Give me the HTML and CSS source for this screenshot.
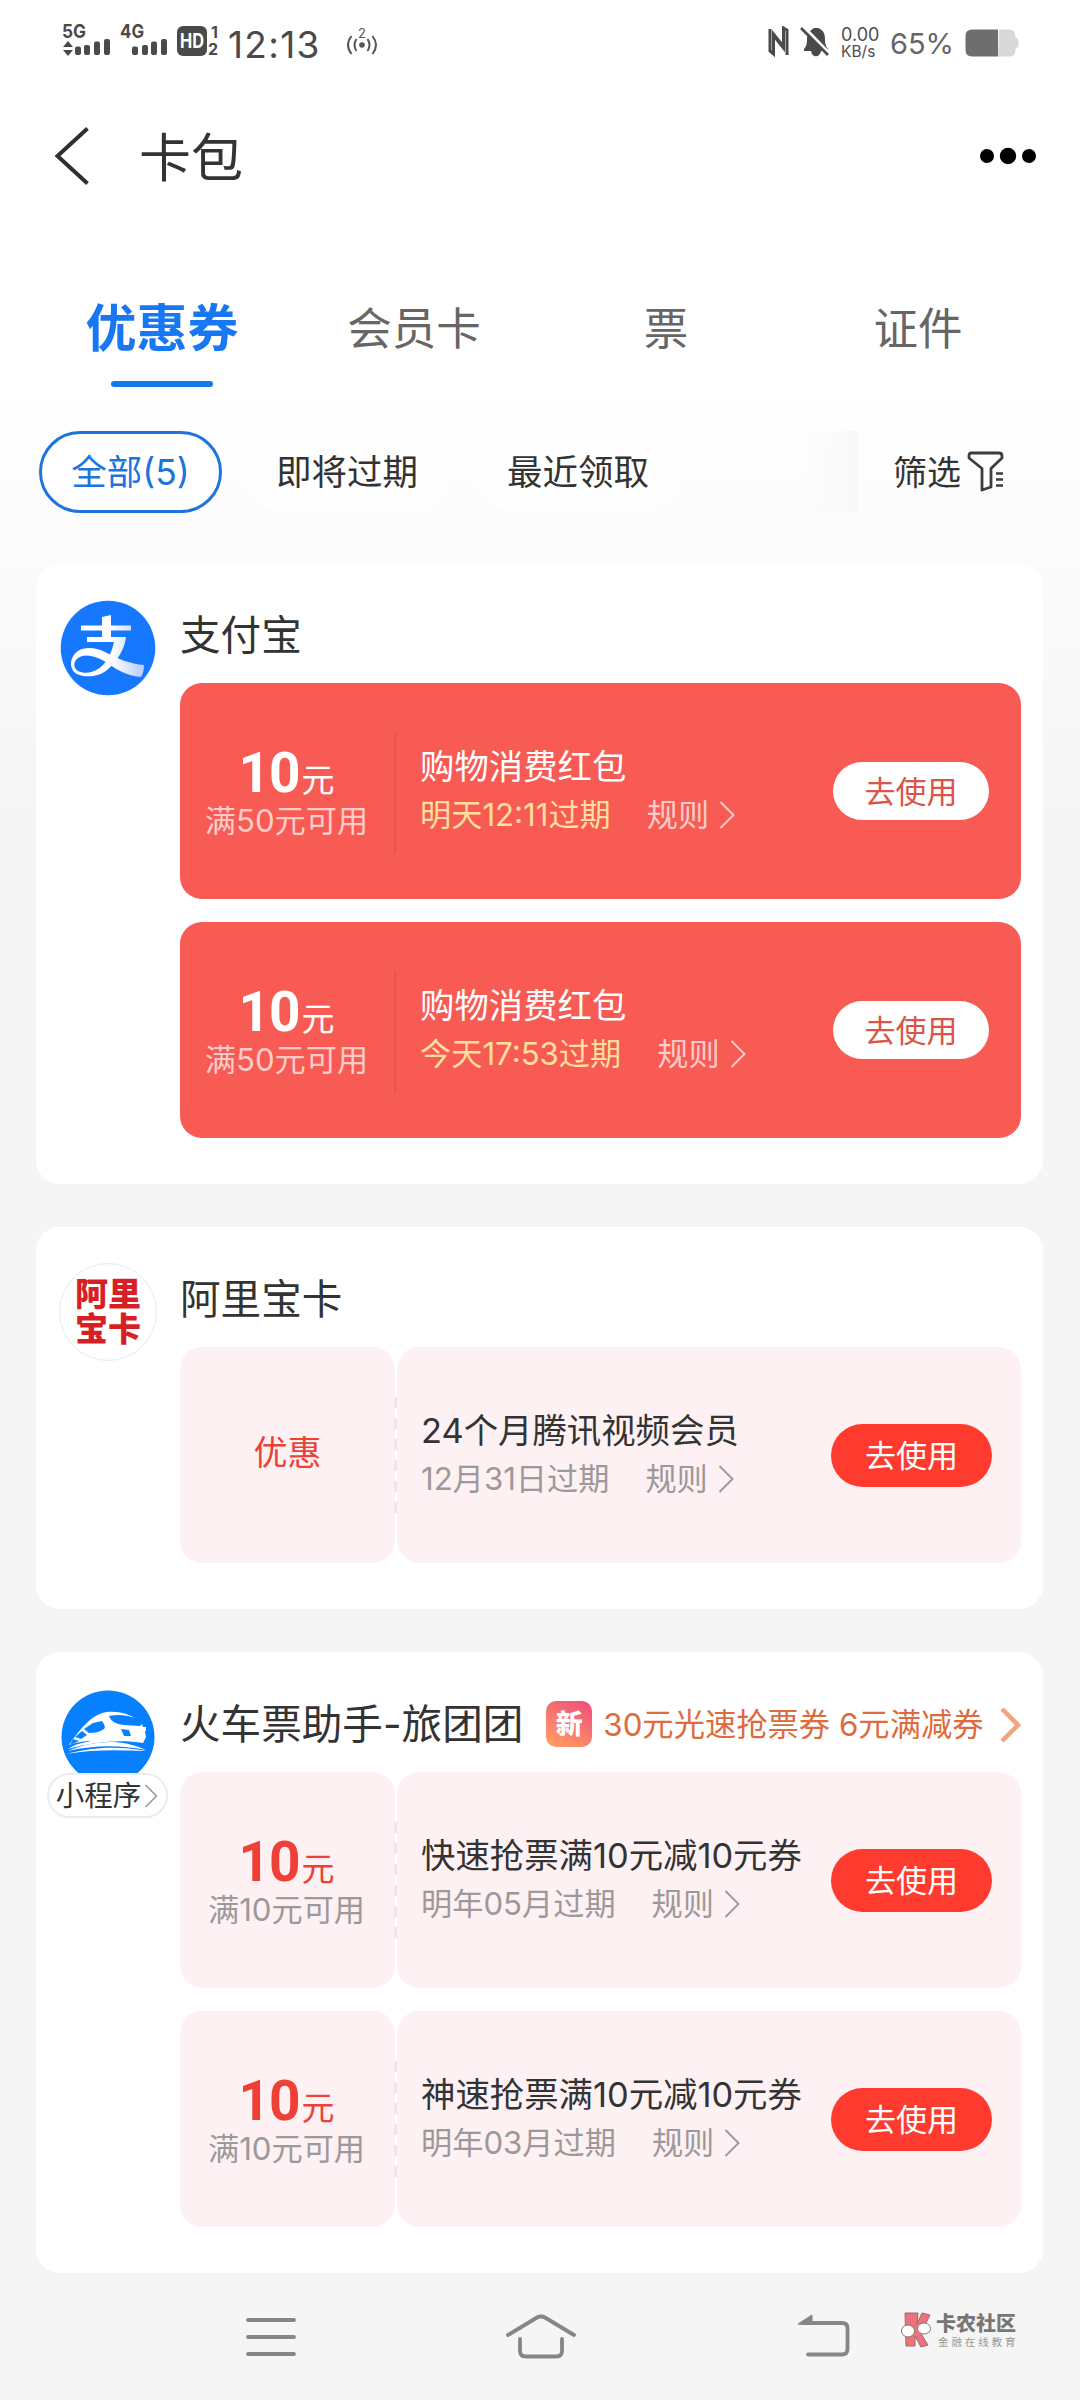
FILE: index.html
```html
<!DOCTYPE html>
<html lang="zh-CN">
<head>
<meta charset="utf-8">
<title>卡包</title>
<link rel="stylesheet" href="styles.css">
</head>
<body>
<svg class="defs" width="0" height="0">
  <symbol id="chev" viewBox="0 0 16 28"><path d="M1.500 1 14.500 14 1.500 27" fill="none" stroke="currentColor" stroke-width="1.900"/></symbol>
</svg>
<div class="screen">
  <header class="status">
    <svg class="st-net" width="164" height="46" viewBox="0 -6 164 46" fill="#4a4a4a">
      <text x="2" y="14" class="net" textLength="24" lengthAdjust="spacingAndGlyphs">5G</text>
      <path d="M8 17l5 6H3zM3 26h10l-5 6z"/>
      <rect x="15" y="22.500" width="6" height="8.500" rx="2"/><rect x="24" y="21" width="6" height="10" rx="2"/><rect x="34" y="17.500" width="6" height="13.500" rx="2"/><rect x="44" y="15" width="6" height="16" rx="2"/>
      <text x="60" y="14" class="net" textLength="24" lengthAdjust="spacingAndGlyphs">4G</text>
      <rect x="72" y="22.500" width="6" height="8.500" rx="2"/><rect x="82" y="21" width="6" height="10" rx="2"/><rect x="91" y="17.500" width="6" height="13.500" rx="2"/><rect x="101" y="15" width="6" height="16" rx="2"/>
      <rect x="117" y="2" width="30" height="30" rx="6"/>
      <text x="120" y="24" class="hd" textLength="24" lengthAdjust="spacingAndGlyphs">HD</text>
      <text x="151" y="14" class="sim">1</text><text x="148" y="31" class="sim">2</text>
    </svg>
    <span class="time">12:13</span>
    <svg class="st-hot" width="34" height="32" viewBox="0 0 34 32" fill="none" stroke="#555" stroke-width="2">
      <circle cx="17" cy="17" r="2.800" fill="#555" stroke="none"/>
      <path d="M11.500 11q-4 6 0 12M22.500 11q4 6 0 12M6.500 8q-7 9 0 18M27.500 8q7 9 0 18"/>
      <text x="17" y="10" class="hotn">2</text>
    </svg>
    <svg class="st-nfc" width="62" height="32" viewBox="0 0 62 32">
      <path d="M2 3v22l3.500 3V8L15 20M19 29V4l-3.500-2v20L6 10" fill="none" stroke="#4a4a4a" stroke-width="3"/>
      <path d="M36 23c3-3 3-7 3-10 0-6 4-9 7-11h4c5 2 7 5 7 11 0 3 0 6 3 10v2h-7c-1 7-9 7-10 0h-7z" fill="#4a4a4a"/>
      <path d="M35 0l27 28" stroke="#fff" stroke-width="3"/><path d="M33 2l27 27" stroke="#4a4a4a" stroke-width="2.600"/>
    </svg>
    <span class="rate"><span class="r1">0.00</span><span class="r2">KB/s</span></span>
    <span class="pct">65%</span>
    <svg class="st-bat" width="54" height="28" viewBox="0 0 54 28">
      <path d="M34 0.500h10q6.500 0 6.500 7v1.500q3 0 3 3v4q0 3-3 3v1.500q0 7-6.500 7H33z" fill="#d8d8d8"/>
      <path d="M33 .5H7Q.5.500.5 7v13.500q0 7 6.500 7h26z" fill="#6e6e6e"/>
    </svg>
  </header>

  <div class="titlebar">
    <svg width="36" height="60" viewBox="0 0 36 60"><path d="M33.500 2.500 3.500 30l30 27.500" fill="none" stroke="#2f2f2f" stroke-width="4"/></svg>
    <h1>卡包</h1>
    <svg class="more" width="58" height="18" viewBox="0 0 58 18"><circle cx="8" cy="9" r="7"/><circle cx="29" cy="9" r="8.200"/><circle cx="50" cy="9" r="7"/></svg>
  </div>

  <nav class="tabs">
    <a class="tab on">优惠券</a><a class="tab">会员卡</a><a class="tab">票</a><a class="tab">证件</a>
  </nav>

  <div class="chips">
    <span class="chip on">全部(5)</span><span class="chip">即将过期</span><span class="chip">最近领取</span>
    <span class="fade"></span>
    <span class="filter"><span class="ftext">筛选</span>
      <svg width="38" height="42" viewBox="0 0 38 42" fill="none" stroke="#3c3c3c" stroke-width="2.800" stroke-linejoin="round">
        <path d="M4 2h28q3 0 3 3v2L24 17.500V36l-9 3V17.500L2 7V5q0-3 2-3z"/><path d="M29 22.500h7M29 28.500h7M29 34.500h7" stroke-width="2.400"/>
      </svg>
    </span>
  </div>

  <main class="cards">
    <section class="card">
      <div class="brand">
        <svg width="96" height="96" viewBox="0 0 96 96">
          <defs><linearGradient id="az" x1="0" x2="1"><stop offset=".55" stop-color="#fff"/><stop offset="1" stop-color="#b5cdf8"/></linearGradient></defs>
          <circle cx="48" cy="48" r="47.300" fill="#1677ff"/>
          <path d="M42 17l9-2v10.500h20v5H51v6.500h15c-1 11-9 25-19 33-8 7-22 8-30 4-8-4-8-17 1-23 8-5 19-3 29 2 12 6 23 11 37 12 0 5-1 9-3 12-16-1-26-9-37-16-9-5-19-8-26-3-5 4-5 10 0 13 6 3 14 2 20-2 8-5 13-14 16-27H27v-5h15v-6.500H21v-5h21z" fill="url(#az)"/>
        </svg>
      </div>
      <div class="body">
        <div class="head"><h2>支付宝</h2></div>
        <div class="list">
          <article class="coupon red">
            <div class="left"><p class="amt"><b>10</b>元</p><p class="cond">满50元可用</p></div>
            <div class="right"><div class="info"><p class="name">购物消费红包</p><p class="sub"><span class="exp">明天12:11过期</span><span class="rule">规则</span><svg class="ch"><use href="#chev"/></svg></p></div><a class="btn">去使用</a></div>
          </article>
          <article class="coupon red">
            <div class="left"><p class="amt"><b>10</b>元</p><p class="cond">满50元可用</p></div>
            <div class="right"><div class="info"><p class="name">购物消费红包</p><p class="sub"><span class="exp">今天17:53过期</span><span class="rule">规则</span><svg class="ch"><use href="#chev"/></svg></p></div><a class="btn">去使用</a></div>
          </article>
        </div>
      </div>
    </section>

    <section class="card">
      <div class="brand"><div class="albk"><span>阿里</span><span>宝卡</span></div></div>
      <div class="body">
        <div class="head"><h2>阿里宝卡</h2></div>
        <div class="list">
          <article class="coupon pink">
            <div class="left"><p class="deal">优惠</p></div>
            <div class="right"><div class="info"><p class="name">24个月腾讯视频会员</p><p class="sub"><span class="exp">12月31日过期</span><span class="rule">规则</span><svg class="ch"><use href="#chev"/></svg></p></div><a class="btn">去使用</a></div>
          </article>
        </div>
      </div>
    </section>

    <section class="card">
      <div class="brand">
        <svg width="96" height="96" viewBox="0 0 96 96">
          <circle cx="48" cy="48" r="46.500" fill="#0680ff"/>
          <path d="M9 56C20 40 32 25 47 23c14-1 22 3 28 6-8-3-18-4-26-2 2 5 6 8 15 9l16 1 2-2 1 3 3 0v3l-1 2 1 5-3 6c-23-4-50-1-75 6 4-3 9-5 14-6l9-2c-7 0-13 1-22 4z" fill="#fff"/>
          <path d="M33 34l9-2c2 3 4 6 2 8-4 3-10 4-15 4l-5-4zM22 42l5 4-6 4-6-2zM13 50l6 2-9 4zM61 40l8 1 2 6-7 0z" fill="#0680ff"/>
          <path d="M6 65c24-6 49-9 80-3-27-1-52-2-80 3zM8 62c23-9 49-14 78-1-27-5-51-5-78 1z" fill="#fff"/>
        </svg>
        <span class="mini">小程序<svg width="14" height="24" viewBox="0 0 14 24"><path d="M1.500 1 12.500 12 1.500 23" fill="none" stroke="#999" stroke-width="1.500"/></svg></span>
      </div>
      <div class="body">
        <div class="head"><h2>火车票助手-旅团团</h2>
          <span class="new">新</span><span class="promo">30元光速抢票券 6元满减券</span>
          <svg class="pch" width="21" height="34" viewBox="0 0 21 34"><path d="M2 1 18 17 2 33" fill="none" stroke="#f3a47d" stroke-width="4.500"/></svg>
        </div>
        <div class="list">
          <article class="coupon pink">
            <div class="left"><p class="amt"><b>10</b>元</p><p class="cond">满10元可用</p></div>
            <div class="right"><div class="info"><p class="name">快速抢票满10元减10元券</p><p class="sub"><span class="exp">明年05月过期</span><span class="rule">规则</span><svg class="ch"><use href="#chev"/></svg></p></div><a class="btn">去使用</a></div>
          </article>
          <article class="coupon pink">
            <div class="left"><p class="amt"><b>10</b>元</p><p class="cond">满10元可用</p></div>
            <div class="right"><div class="info"><p class="name">神速抢票满10元减10元券</p><p class="sub"><span class="exp">明年03月过期</span><span class="rule">规则</span><svg class="ch"><use href="#chev"/></svg></p></div><a class="btn">去使用</a></div>
          </article>
        </div>
      </div>
    </section>
  </main>

  <footer class="navbar">
    <svg width="50" height="46" viewBox="0 0 50 46"><path d="M2 6h46M2 23h46M2 40h46"/></svg>
    <svg width="72" height="46" viewBox="0 0 72 46"><path d="M3 21 32 3.500q4-2 8 0L69 21M15 25v12q0 5.500 6 5.500h30q6 0 6-5.500V25"/></svg>
    <svg width="52" height="46" viewBox="0 0 52 46"><path d="M5 9h39q5.500 0 5.500 5v21q0 5.500-5.500 5.500H10"/><path class="tip" d="M0 10 14 1v9z"/></svg>
    <div class="mark">
      <svg width="34" height="38" viewBox="0 0 34 38" stroke="#8a7272" stroke-width="1">
        <path d="M6 2h13l-1 11 5-11 8 2-6 12-4 5 8 13-7 2-6-11v10H7z" fill="#f0707c"/>
        <ellipse cx="9" cy="20" rx="6.500" ry="6" fill="#fff"/><ellipse cx="25" cy="17.500" rx="6.500" ry="5.500" fill="#fff"/>
      </svg>
      <div><p class="m1">卡农社区</p><p class="m2">金融在线教育</p></div>
    </div>
  </footer>
</div>
</body>
</html>
```
FILE: styles.css
```css
* { box-sizing: border-box; }
body { margin: 0; }
h1, h2, p { margin: 0; font-weight: 400; white-space: nowrap; }
.defs { position: absolute; }
svg { display: block; flex: none; }
.screen {
  width: 1080px; height: 2400px; display: flex; flex-direction: column;
  font-family: Inter, "Noto Sans CJK SC", sans-serif; color: #333; font-weight: 400;
  background: linear-gradient(#fff 0, #fff 380px, #f5f5f5 820px); overflow: hidden;
}

/* status bar */
.status { height: 100px; padding: 24px 0 0 60px; display: flex; align-items: flex-start; }
.st-net { margin-top: -6px; }
.net { font: 700 19px Inter, sans-serif; }
.hd { font: 700 20px Inter, sans-serif; fill: #fff; }
.sim { font: 700 16px Inter, sans-serif; }
.hotn { font: 400 13px Inter, sans-serif; fill: #555; stroke: none; text-anchor: middle; }
.time { width: 100px; margin-left: 4px; font-size: 37px; line-height: 41px; color: #4a4a4a; letter-spacing: 1.300px; }
.st-hot { margin: 4px 0 0 17px; }
.st-nfc { margin: 2px 0 0 389px; }
.rate { width: 38px; margin: 2px 0 0 11px; display: flex; flex-direction: column; color: #4d4d4d; white-space: nowrap; }
.r1 { font-size: 18px; line-height: 17px; }
.r2 { font-size: 15.500px; line-height: 17px; }
.pct { width: 66px; margin-left: 11px; font-size: 29px; line-height: 39px; color: #666; white-space: nowrap; }
.st-bat { margin: 5px 0 0 9px; }

.titlebar { height: 112px; padding: 0 43px 0 54px; display: flex; align-items: center; }
.titlebar h1 { margin: 6px 0 0 49px; font-size: 52px; line-height: 60px; }
.more { margin-left: auto; fill: #000; }

.tabs { height: 175px; padding: 84px 36px 0; display: grid; grid-template-columns: repeat(4, 252px); }
.tab { height: 91px; text-align: center; font-size: 44.500px; line-height: 66px; color: #666; }
.tab.on { font-size: 51px; font-weight: 700; color: #1877f2; display: flex; flex-direction: column; align-items: center; }
.tab.on::after { content: ""; width: 102px; height: 6px; margin-top: 19px; border-radius: 3px; background: #1677e6; }

.chips { height: 176px; padding: 44px 0 0 39px; display: flex; align-items: flex-start; }
.chip { width: 202px; height: 82px; margin-left: 29px; border-radius: 41px; background: #fefefe; text-align: center; font-size: 35.500px; line-height: 84px; white-space: nowrap; }
.chip.on { width: 183px; margin: 0 -5px 0 0; border: 3px solid #1c74dc; color: #1c74dc; line-height: 78px; background: #fff; }
.fade { width: 57px; height: 82px; margin-left: 122px; background: linear-gradient(90deg, rgba(246,246,246,0), #f8f8f8); }
.filter { height: 82px; margin-left: 35px; display: flex; align-items: center; gap: 6px; font-size: 34px; }
.ftext { margin-top: -3px; }

/* coupon groups */
.cards { padding: 0 37px 0 36px; display: flex; flex-direction: column; gap: 43px; }
.card { display: flex; padding: 0 22px 46px 0; border-radius: 24px; background: #fff; }
.brand { width: 144px; padding-top: 37px; display: flex; flex-direction: column; align-items: center; flex: none; }
.albk { width: 98px; height: 98px; margin-top: -1px; border: 1px solid #e9e9e9; border-radius: 50%; display: flex; flex-direction: column; align-items: center; justify-content: center; font-size: 33px; line-height: 35px; font-weight: 900; color: #d91f26; }
.mini { width: 121px; height: 45px; margin: -12px 2px 0 0; border: 2px solid #ececec; border-radius: 23px; background: #fff; display: flex; align-items: center; justify-content: center; gap: 3px; font-size: 28.500px; line-height: 39px; position: relative; }
.body { flex: 1; }
.head { height: 120px; padding-top: 25px; display: flex; align-items: center; }
.head h2 { margin-top: -6px; font-size: 40.600px; }
.new { width: 46px; height: 46px; margin: -2px 0 0 23px; border-radius: 10px; background: linear-gradient(30deg, #ff9a62 10%, #f0547c 90%); color: #fff; font-size: 27px; line-height: 48px; font-weight: 900; text-align: center; flex: none; }
.promo { margin: -4px 0 0 11px; font-size: 31.300px; color: #de6b3c; white-space: nowrap; }
.pch { margin-left: auto; }
.list { display: flex; flex-direction: column; gap: 23px; }
.coupon { height: 216px; display: flex; position: relative; }
.left { width: 215px; padding: 60px 2px 0 0; text-align: center; display: flex; flex-direction: column; align-items: center; }
.amt { height: 60px; display: flex; align-items: baseline; font-size: 33px; line-height: 60px; }
.amt b { font: 700 55px/60px Roboto, sans-serif; letter-spacing: -1px; margin-right: 2px; }
.cond { margin-top: 2px; font-size: 31.200px; line-height: 32px; }
.deal { margin: 25px 0 0 2px; font-size: 34px; line-height: 42px; }
.right { flex: 1; margin-left: 2px; padding: 0 29px 0 24px; display: flex; align-items: center; justify-content: space-between; }
.name { font-size: 34.400px; line-height: 48px; }
.sub { font-size: 31.200px; line-height: 48px; display: flex; align-items: center; }
.rule { margin-left: 36px; }
.ch { width: 16px; height: 28px; margin-left: 10px; }
.btn { height: 63px; width: 161px; border-radius: 32px; text-align: center; font-size: 31px; line-height: 63px; flex: none; }

.red { border-radius: 22px; background: #f75b54; color: #fff; }
.red .right { padding: 0 32px 0 23px; }
.red .cond, .red .rule, .red .ch { color: #fdccc9; }
.red .exp { color: #ffdf9c; }
.red .btn { width: 156px; height: 58px; line-height: 59px; background: #fff; color: #d95548; }
.red::before { content: ""; position: absolute; left: 214px; top: 50px; width: 2px; height: 120px; background: #ee524c; }

.pink .left, .pink .right { border-radius: 22px; background: #fef1f3; }
.pink .amt, .pink .deal { color: #ee4036; }
.pink .cond, .pink .sub { color: #9d9899; }
.pink .btn { background: #ff3b30; color: #fff; }
.pink::before { content: ""; position: absolute; left: 214px; top: 50px; width: 3px; height: 118px; background: repeating-linear-gradient(#f0e6e8 0 11px, transparent 11px 21px); }

/* system navigation */
.navbar { padding: 41px 0 0 246px; display: flex; align-items: flex-start; }
.navbar > svg { fill: none; stroke: #868686; stroke-width: 3.800; stroke-linecap: round; }
.navbar > svg:nth-child(2) { margin-left: 209px; }
.navbar > svg:nth-child(3) { margin-left: 221px; }
.navbar .tip { fill: #868686; stroke-width: 1; }
.mark { margin-left: 49px; margin-top: -3px; display: flex; gap: 3px; }
.m1 { padding-top: 1px; font-size: 20px; line-height: 24px; font-weight: 900; color: #777; }
.m2 { font-size: 10.500px; line-height: 14px; color: #999; letter-spacing: 2.900px; margin-left: 2px; }
```
